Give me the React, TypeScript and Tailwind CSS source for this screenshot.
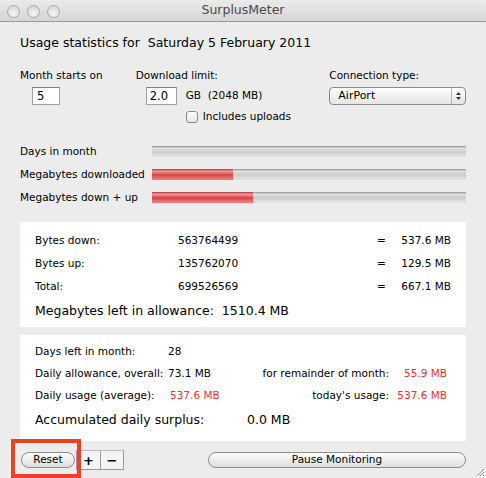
import React from "react";

const LIMIT_MB = 2048;

const usage = {
  down: 537.6,
  downUp: 667.1,
  daysFraction: 0,
};

const track =
  "bg-[linear-gradient(to_bottom,#9c9c9c_0px,#a8a8a8_1px,#e4e4e4_2px,#d6d6d6_4px,#cacaca_6px,#d8d8d8_8px,#e2e2e2_10px)]";
const fill =
  "bg-[linear-gradient(to_bottom,#b94a4a_0px,#c25252_1px,#f2a0a0_2px,#e67070_4px,#cc4545_6px,#e06262_8px,#f07a7a_10px)]";

function Meter({ label, fraction }: { label: string; fraction: number }) {
  return (
    <div className="flex items-center h-[23px]">
      <div className="w-[132px] text-[10.5px] whitespace-nowrap">{label}</div>
      <div className={`relative flex-1 h-[11px] ${track}`}>
        <div
          className={`h-full ${fill} border-r border-[#f0b0b0]`}
          style={{ width: `${fraction * 100}%`, display: fraction > 0 ? "block" : "none" }}
        />
      </div>
    </div>
  );
}

function Traffic() {
  return (
    <div className="w-[13px] h-[13px] rounded-full border border-[#a9a9a9] bg-[radial-gradient(circle_at_50%_70%,#f6f6f6,#d0d0d0)]" />
  );
}

function ByteRow({ label, bytes, mb }: { label: string; bytes: string; mb: string }) {
  return (
    <div className="flex items-center h-[23px] text-[10.5px] whitespace-nowrap">
      <div className="w-[143px]">{label}</div>
      <div className="w-[199px]">{bytes}</div>
      <div className="w-[21px]">=</div>
      <div className="w-[53px] text-right">{mb}</div>
    </div>
  );
}

export default function App() {
  return (
    <div
      className="relative w-[486px] h-[478px] bg-[#ececec] overflow-hidden text-black whitespace-nowrap"
      style={{ fontFamily: '"DejaVu Sans", "Noto Sans", sans-serif' }}
    >
      {/* title bar */}
      <div className="relative h-[22px] flex items-center border-b border-[#979797] bg-[linear-gradient(to_bottom,#ebebeb,#d5d5d5)]">
        <div className="flex gap-[7px] pl-[7px] pt-[1px]">
          <Traffic />
          <Traffic />
          <Traffic />
        </div>
        <div className="absolute inset-0 flex items-center justify-center text-[12.5px] text-[#4a4a4a]">
          SurplusMeter
        </div>
      </div>

      <div className="pl-[20px] pr-[20px]">
        <div className="mt-[13px] h-[16px] text-[12.5px] leading-[16px]">
          Usage statistics for&nbsp; Saturday 5 February 2011
        </div>

        {/* settings */}
        <div className="mt-[17px] flex">
          <div className="w-[116px]">
            <div className="h-[15px] text-[10.5px] leading-[15px]">Month starts on</div>
            <div className="mt-[4px] ml-[12px] w-[28px] h-[18px] bg-white border border-[#a0a0a0] border-t-[#7e7e7e] text-[11.5px] leading-[16px] pl-[4px]">
              5
            </div>
          </div>
          <div className="w-[194px]">
            <div className="h-[15px] text-[10.5px] leading-[15px]">Download limit:</div>
            <div className="mt-[4px] ml-[10px] flex items-center">
              <div className="w-[31px] h-[18px] bg-white border border-[#a0a0a0] border-t-[#7e7e7e] text-[11.5px] leading-[16px] pl-[3px]">
                2.0
              </div>
              <div className="ml-[9px] text-[10.5px]">GB&nbsp; (2048 MB)</div>
            </div>
            <div className="mt-[6px] ml-[50px] flex items-center h-[12px]">
              <div className="w-[12px] h-[12px] rounded-[3px] border border-[#8c8c8c] bg-[linear-gradient(to_bottom,#ffffff,#e4e4e4)]" />
              <div className="ml-[5px] text-[10.5px]">Includes uploads</div>
            </div>
          </div>
          <div className="w-[137px]">
            <div className="h-[15px] text-[10.5px] leading-[15px]">Connection type:</div>
            <div className="mt-[4px] flex h-[18px] rounded-[4px] border border-[#8a8a8a] bg-[linear-gradient(to_bottom,#ffffff,#f0f0f0_50%,#e6e6e6)]">
              <div className="flex-1 pl-[8px] text-[11px] leading-[16px]">AirPort</div>
              <div className="w-[14px] border-l border-[#b5b5b5] flex flex-col items-center justify-center gap-[2px]">
                <svg width="5" height="3" viewBox="0 0 5 3">
                  <path d="M0 3 L2.5 0 L5 3 Z" fill="#333" />
                </svg>
                <svg width="5" height="3" viewBox="0 0 5 3">
                  <path d="M0 0 L2.5 3 L5 0 Z" fill="#333" />
                </svg>
              </div>
            </div>
          </div>
        </div>

        {/* meters */}
        <div className="mt-[17px]">
          <Meter label="Days in month" fraction={usage.daysFraction} />
          <Meter label="Megabytes downloaded" fraction={usage.down / LIMIT_MB} />
          <Meter label="Megabytes down + up" fraction={usage.downUp / LIMIT_MB} />
        </div>

        {/* byte totals */}
        <div className="mt-[13px] bg-white h-[105px] pl-[15px] pt-[7px]">
          <ByteRow label="Bytes down:" bytes="563764499" mb="537.6 MB" />
          <ByteRow label="Bytes up:" bytes="135762070" mb="129.5 MB" />
          <ByteRow label="Total:" bytes="699526569" mb="667.1 MB" />
          <div className="h-[26px] flex items-center text-[12.5px]">
            Megabytes left in allowance:&nbsp; 1510.4 MB
          </div>
        </div>

        {/* daily figures */}
        <div className="mt-[8px] bg-white h-[106px] pl-[15px] pt-[6px] text-[10.5px]">
          <div className="flex items-center h-[22px]">
            <div className="w-[133px]">Days left in month:</div>
            <div>28</div>
          </div>
          <div className="flex items-center h-[22px]">
            <div className="w-[133px]">Daily allowance, overall:</div>
            <div className="w-[90px]">73.1 MB</div>
            <div className="w-[131px] text-right">for remainder of month:</div>
            <div className="w-[58px] text-right text-[#f03030]">55.9 MB</div>
          </div>
          <div className="flex items-center h-[22px]">
            <div className="w-[135px]">Daily usage (average):</div>
            <div className="w-[88px] text-[#f03030]">537.6 MB</div>
            <div className="w-[131px] text-right">today's usage:</div>
            <div className="w-[58px] text-right text-[#f03030]">537.6 MB</div>
          </div>
          <div className="flex items-center h-[26px] text-[12.5px]">
            <div className="w-[212px]">Accumulated daily surplus:</div>
            <div>0.0 MB</div>
          </div>
        </div>

        {/* bottom controls */}
        <div className="mt-[8px] flex items-center h-[22px]">
          <div className="ml-[1px] w-[54px] h-[16px] rounded-full border border-[#8c8c8c] bg-[linear-gradient(to_bottom,#fefefe,#ececec_50%,#e0e0e0)] flex items-center justify-center text-[10.5px]">
            Reset
          </div>
          <div className="ml-[1px] flex h-[20px] border border-[#9a9a9a] border-t-[#bdbdbd] bg-[#f4f4f4]">
            <div className="w-[23px] flex items-center justify-center text-[13px] font-bold leading-none">+</div>
            <div className="w-[23px] border-l border-[#9a9a9a] flex items-center justify-center text-[13px] font-bold leading-none">
              −
            </div>
          </div>
          <div className="ml-[84px] flex-1 h-[16px] rounded-full border border-[#8c8c8c] bg-[linear-gradient(to_bottom,#fefefe,#ececec_50%,#e0e0e0)] flex items-center justify-center text-[10.5px]">
            Pause Monitoring
          </div>
        </div>
      </div>

      {/* resize grip */}
      <svg className="absolute right-[1px] bottom-[1px]" width="11" height="11" viewBox="0 0 11 11">
        <path d="M10 3 L3 10 M10 6 L6 10 M10 9 L9 10" stroke="#9a9a9a" strokeWidth="1" />
      </svg>

      {/* highlight around Reset */}
      <div className="absolute left-[11px] top-[439px] w-[70px] h-[39px] border-[4px] border-[#ea4124]" />
    </div>
  );
}
